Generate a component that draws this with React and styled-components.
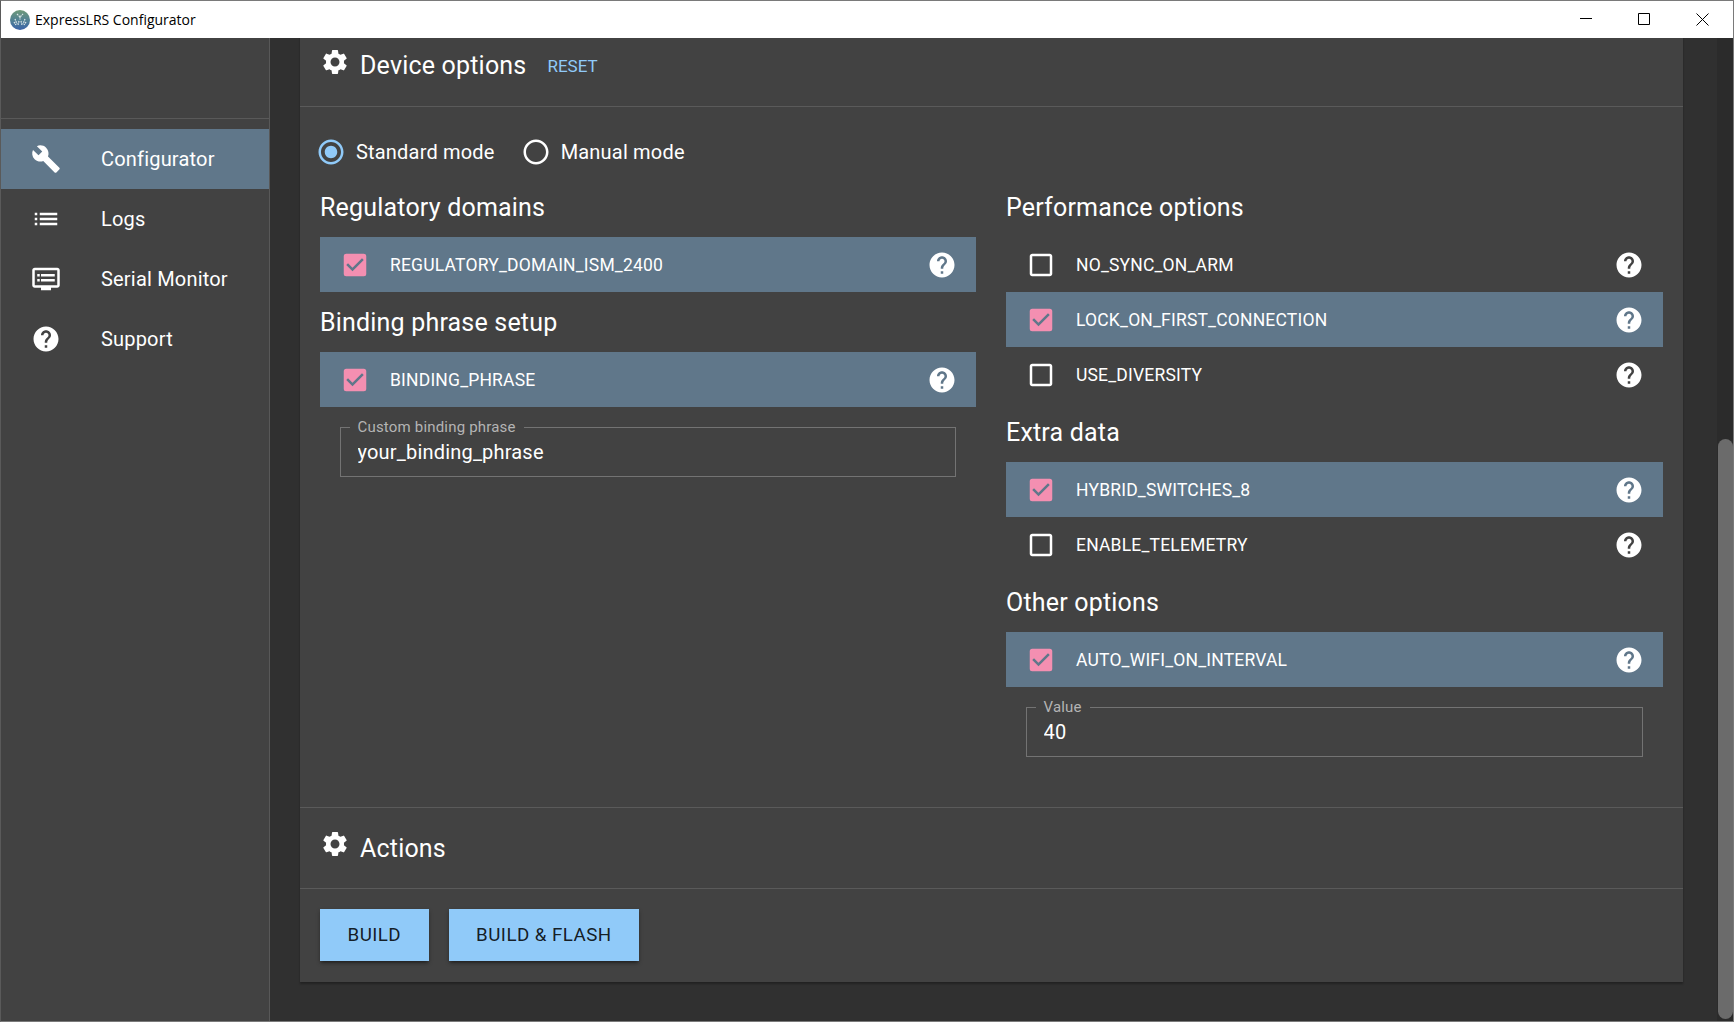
import React from 'react';
import styled, { createGlobalStyle } from 'styled-components';
import {
  MdBuild,
  MdList,
  MdDvr,
  MdHelp,
  MdSettings,
  MdCheckBox,
  MdCheckBoxOutlineBlank,
  MdRadioButtonChecked,
  MdRadioButtonUnchecked,
} from 'react-icons/md';

const navItems = [
  { label: 'Configurator', icon: MdBuild, active: true },
  { label: 'Logs', icon: MdList },
  { label: 'Serial Monitor', icon: MdDvr },
  { label: 'Support', icon: MdHelp },
];

const App = () => (
  <>
    <GlobalStyle />
    <Frame>
      <TitleBar>
        <AppLogo />
        <TitleText>ExpressLRS Configurator</TitleText>
        <WindowControls>
          <WindowButton>
            <svg width="12" height="12" viewBox="0 0 12 12"><path d="M0 5.5h12" stroke="#000" fill="none" /></svg>
          </WindowButton>
          <WindowButton>
            <svg width="12" height="12" viewBox="0 0 12 12"><path d="M.5.5h11v11H.5z" stroke="#000" fill="none" /></svg>
          </WindowButton>
          <WindowButton>
            <svg width="13" height="13" viewBox="0 0 13 13"><path d="M.5.5l12 12M12.5.5l-12 12" stroke="#000" fill="none" /></svg>
          </WindowButton>
        </WindowControls>
      </TitleBar>
      <Body>
        <Sidebar>
          <SidebarTop />
          <NavList>
            {navItems.map(({ label, icon: Icon, active }) => (
              <NavItem key={label} $active={active}>
                <NavIcon><Icon size={30} /></NavIcon>
                {label}
              </NavItem>
            ))}
          </NavList>
        </Sidebar>
        <Main>
          <Card>
            <CardHeader>
              <HeaderIcon><MdSettings size={30} /></HeaderIcon>
              <HeaderTitle>Device options</HeaderTitle>
              <ResetButton>RESET</ResetButton>
            </CardHeader>
            <CardBody>
              <ModeRow>
                <ModeOption>
                  <MdRadioButtonChecked size={30} color="#90caf9" />
                  Standard mode
                </ModeOption>
                <ModeOption>
                  <MdRadioButtonUnchecked size={30} color="#fff" />
                  Manual mode
                </ModeOption>
              </ModeRow>
              <Columns>
                <div>
                  <GroupTitle>Regulatory domains</GroupTitle>
                  <Option name="REGULATORY_DOMAIN_ISM_2400" checked />
                  <GroupTitle>Binding phrase setup</GroupTitle>
                  <Option name="BINDING_PHRASE" checked />
                  <Field label="Custom binding phrase" value="your_binding_phrase" />
                </div>
                <div>
                  <GroupTitle>Performance options</GroupTitle>
                  <Option name="NO_SYNC_ON_ARM" />
                  <Option name="LOCK_ON_FIRST_CONNECTION" checked />
                  <Option name="USE_DIVERSITY" />
                  <GroupTitle>Extra data</GroupTitle>
                  <Option name="HYBRID_SWITCHES_8" checked />
                  <Option name="ENABLE_TELEMETRY" />
                  <GroupTitle>Other options</GroupTitle>
                  <Option name="AUTO_WIFI_ON_INTERVAL" checked />
                  <Field label="Value" value="40" />
                </div>
              </Columns>
            </CardBody>
            <CardHeader $bordered>
              <HeaderIcon><MdSettings size={30} /></HeaderIcon>
              <HeaderTitle>Actions</HeaderTitle>
            </CardHeader>
            <ActionBar>
              <ActionButton>BUILD</ActionButton>
              <ActionButton>BUILD &amp; FLASH</ActionButton>
            </ActionBar>
          </Card>
        </Main>
        <ScrollTrack>
          <ScrollThumb />
        </ScrollTrack>
      </Body>
    </Frame>
  </>
);

const AppLogo = () => (
  <svg width="20" height="20" viewBox="0 0 20 20">
    <defs>
      <linearGradient id="logoFill" x1="0" y1="0" x2="0" y2="1">
        <stop offset="0" stopColor="#6f9a78" />
        <stop offset="0.55" stopColor="#4f7f96" />
        <stop offset="1" stopColor="#3a63a8" />
      </linearGradient>
    </defs>
    <circle cx="10" cy="10" r="10" fill="url(#logoFill)" />
    <path d="M7 4l3 3 3-3M10 7v3M5 9l2 5M15 9l-2 5M4 12l2 3M16 12l-2 3M9 11l-1 4M11 11l1 4" stroke="#dfe8ea" strokeWidth="1.2" fill="none" strokeDasharray="1.6 .8" />
  </svg>
);

const Option = ({ name, checked }) => (
  <OptionRow $checked={checked}>
    <CheckSlot $checked={checked}>
      {checked ? <MdCheckBox size={30} /> : <MdCheckBoxOutlineBlank size={30} />}
    </CheckSlot>
    <OptionName>{name}</OptionName>
    <HelpSlot><MdHelp size={30} /></HelpSlot>
  </OptionRow>
);

const Field = ({ label, value }) => (
  <FieldBox>
    <FieldLabel>{label}</FieldLabel>
    <FieldInput readOnly value={value} />
  </FieldBox>
);

const GlobalStyle = createGlobalStyle`
  html, body {
    margin: 0;
    padding: 0;
    background: #303030;
  }
  body {
    font-family: Roboto, "Liberation Sans", sans-serif;
    letter-spacing: 0.19px;
    color: #fff;
  }
`;

const Frame = styled.div`
  width: 1734px;
  height: 1022px;
  box-sizing: border-box;
  border: 1px solid #7a7a7a;
  border-left-color: #5a5a5a;
  display: flex;
  flex-direction: column;
  overflow: hidden;
`;

const TitleBar = styled.div`
  height: 37px;
  flex: none;
  background: #fff;
  display: flex;
  align-items: center;
  padding-left: 9px;
`;

const TitleText = styled.span`
  margin-left: 5px;
  font-family: "Open Sans", sans-serif;
  font-size: 14px;
  letter-spacing: 0;
  color: #000;
`;

const WindowControls = styled.div`
  margin-left: auto;
  padding-right: 1px;
  display: flex;
`;

const WindowButton = styled.div`
  width: 58.5px;
  height: 37px;
  box-sizing: border-box;
  padding-bottom: 1px;
  display: flex;
  align-items: center;
  justify-content: center;
`;

const Body = styled.div`
  flex: 1;
  min-height: 0;
  display: flex;
`;

const Sidebar = styled.div`
  width: 269px;
  flex: none;
  box-sizing: border-box;
  background: #424242;
  border-right: 1px solid #585858;
`;

const SidebarTop = styled.div`
  height: 80px;
  border-bottom: 1px solid #595959;
`;

const NavList = styled.div`
  padding-top: 10px;
`;

const NavItem = styled.div`
  height: 60px;
  display: flex;
  align-items: center;
  padding-left: 30px;
  font-size: 20px;
  background: ${(p) => (p.$active ? '#60778a' : 'transparent')};
`;

const NavIcon = styled.span`
  width: 70px;
  display: flex;
  align-items: center;
`;

const Main = styled.div`
  flex: 1;
  min-width: 0;
  overflow: hidden;
  padding: 0 34px 0 30px;
  background: #303030;
`;

const Card = styled.div`
  margin-top: -13px;
  background: #424242;
  box-shadow: 0 2px 2px rgba(0, 0, 0, 0.3);
`;

const CardHeader = styled.div`
  height: 82px;
  box-sizing: border-box;
  display: flex;
  align-items: center;
  padding-left: 20px;
  border-bottom: 1px solid #5a5a5a;
  ${(p) => p.$bordered && 'border-top: 1px solid #5a5a5a;'}
`;

const HeaderIcon = styled.span`
  display: flex;
  margin-bottom: 8px;
`;

const HeaderTitle = styled.h2`
  margin: 0 0 0 10px;
  font-size: 25px;
  font-weight: 400;
`;

const ResetButton = styled.span`
  margin-left: 21px;
  font-size: 17px;
  letter-spacing: 0;
  color: #90caf9;
`;

const CardBody = styled.div`
  padding: 20px 20px 50px;
`;

const ModeRow = styled.div`
  height: 50px;
  box-sizing: border-box;
  padding-top: 10px;
  margin-left: -4px;
  display: flex;
  align-items: flex-start;
  gap: 26px;
`;

const ModeOption = styled.label`
  display: flex;
  align-items: center;
  gap: 10px;
  height: 30px;
  font-size: 20px;
`;

const Columns = styled.div`
  display: grid;
  grid-template-columns: 656px 657px;
  column-gap: 30px;
  align-items: start;
`;

const GroupTitle = styled.h3`
  margin: 0;
  height: 60px;
  display: flex;
  align-items: center;
  font-size: 25px;
  font-weight: 400;
`;

const OptionRow = styled.div`
  height: 55px;
  display: flex;
  align-items: center;
  padding: 0 19px 0 20px;
  background: ${(p) => (p.$checked ? '#60778a' : 'transparent')};
`;

const CheckSlot = styled.span`
  display: flex;
  margin-right: 20px;
  color: ${(p) => (p.$checked ? '#f48fb1' : '#fff')};
`;

const OptionName = styled.span`
  flex: 1;
  font-size: 17.5px;
`;

const HelpSlot = styled.span`
  display: flex;
`;

const FieldBox = styled.div`
  position: relative;
  height: 50px;
  margin: 20px 20px 0;
  box-sizing: border-box;
  border: 1px solid #737373;
  display: flex;
  align-items: center;
`;

const FieldLabel = styled.span`
  position: absolute;
  top: -10px;
  left: 8.5px;
  padding: 0 8px;
  background: #424242;
  font-size: 15px;
  line-height: 18px;
  color: #b4b4b4;
`;

const FieldInput = styled.input`
  flex: 1;
  min-width: 0;
  border: 0;
  outline: 0;
  background: transparent;
  padding: 0 0 0 16.5px;
  font: 20px Roboto, sans-serif;
  letter-spacing: 0.19px;
  color: #fff;
`;

const ActionBar = styled.div`
  height: 93px;
  box-sizing: border-box;
  padding: 20px;
  display: flex;
  gap: 20px;
`;

const ActionButton = styled.button`
  height: 52px;
  border: 0;
  padding: 0 27.5px;
  background: #90caf9;
  color: rgba(0, 0, 0, 0.87);
  font: 400 18.75px Roboto, sans-serif;
  letter-spacing: 0.45px;
  box-shadow: 0 3px 3px -2px rgba(0, 0, 0, 0.4), 0 2px 4px rgba(0, 0, 0, 0.3);
`;

const ScrollTrack = styled.div`
  width: 16px;
  flex: none;
  background: #2b2b2b;
  display: flex;
  justify-content: center;
  padding-top: 401px;
  padding-bottom: 2px;
`;

const ScrollThumb = styled.div`
  width: 15px;
  height: 100%;
  background: #6b6b6b;
  border-radius: 8px;
`;

export default App;
